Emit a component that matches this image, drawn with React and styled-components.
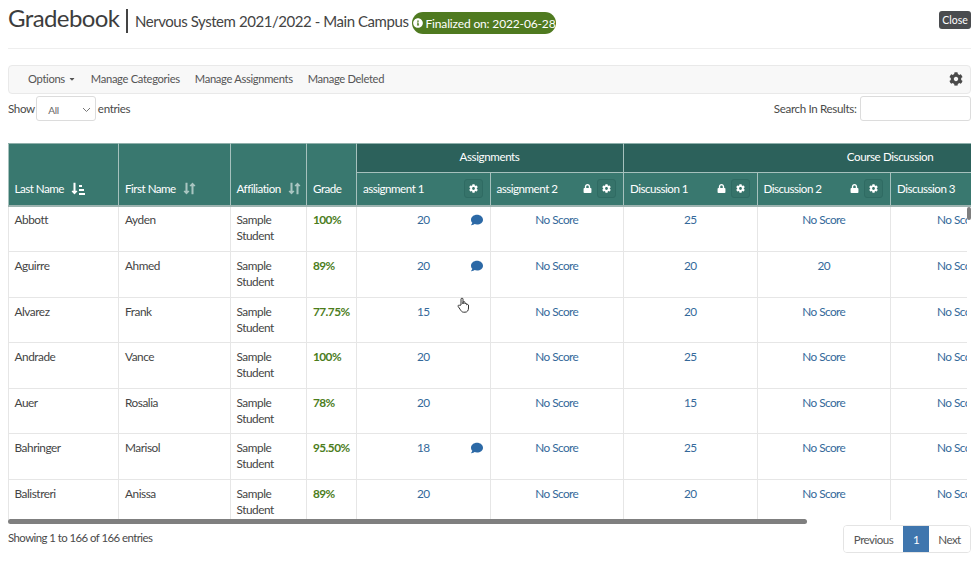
import React from 'react';
import styled, { createGlobalStyle } from 'styled-components';
import { FaCog, FaLock, FaComment, FaInfoCircle, FaCaretDown, FaLongArrowAltDown, FaLongArrowAltUp } from 'react-icons/fa';

const Global = createGlobalStyle`
  html, body { margin: 0; padding: 0; background: #fff; }
  body { font-family: Lato, "Noto Sans", sans-serif; color: #454545; font-size: 12px; overflow: hidden; }
  * { box-sizing: border-box; }
`;

const Page = styled.div`
  width: 980px; height: 568px; padding: 0 9px 0 8px; position: relative; overflow: hidden;
`;
const Header = styled.header`
  height: 49px; display: flex; align-items: flex-start; justify-content: space-between;
  border-bottom: 1px solid #eeeeee;
`;
const TitleGroup = styled.div`display: flex; align-items: center; height: 36px;`;
const Title = styled.h1`
  margin: 0; font-size: 24px; font-weight: 400; letter-spacing: -0.6px; color: #3d3d3d; padding-right: 7px; line-height: 34px;
`;
const Bar = styled.span`display: block; width: 1.5px; height: 24px; margin-top: 5px; background: #444; margin-right: 7px;`;
const Subtitle = styled.span`font-size: 15px; letter-spacing: -0.44px; color: #444; margin-top: 5px; white-space: nowrap;`;
const Badge = styled.span`
  margin-left: 4px; margin-top: 10px; height: 22px; width: 144px; background: #4f7a20; color: #fff; border-radius: 11px;
  display: flex; align-items: center; justify-content: center; gap: 2px; font-size: 12px; letter-spacing: -0.15px; white-space: nowrap;
  svg { width: 10px; height: 10px; flex: none; }
`;
const CloseBtn = styled.button`
  margin-top: 11px; width: 32px; height: 18px; padding: 0; border: 0; border-radius: 3px; background: #4a4c4f; color: #fff;
  font: 400 10.5px Lato, sans-serif;
`;
const Toolbar = styled.nav`
  margin-top: 16px; height: 29px; padding: 0 7px 2px 19px; border: 1px solid #e9e9e9; border-radius: 4px; background: #f8f8f8;
  display: flex; align-items: center; gap: 15px; font-size: 11.2px; letter-spacing: -0.33px; color: #555;
`;
const NavItem = styled.span`display: inline-flex; align-items: center; gap: 3px; svg { width: 8px; height: 8px; }`;
const Gear = styled.span`margin-left: auto; display: flex; color: #4a4a4a; svg { width: 14px; height: 14px; }`;
const Controls = styled.div`
  margin-top: 2px; height: 25px; display: flex; justify-content: space-between; align-items: center; font-size: 11.6px; letter-spacing: -0.35px; color: #4a4a4a;
`;
const Group = styled.div`display: flex; align-items: center; gap: 1.5px;`;
const FakeSelect = styled.div`
  width: 60px; height: 25px; border: 1px solid #dcdcdc; border-radius: 3px; background: #fff;
  display: flex; align-items: center; justify-content: space-between; padding: 2px 3px 0 11px; font-size: 10px; color: #666;
`;
const Chevron = styled.svg`width: 9px; height: 6px; margin-right: 1px;`;
const SearchBox = styled.input`width: 111px; height: 25px; margin-left: 2px; border: 1px solid #dcdcdc; border-radius: 3px; background: #fff;`;

const TableArea = styled.div`margin-top: 22px; width: 963px; height: 382px; position: relative; overflow: hidden;`;
const Grid = styled.table`
  table-layout: fixed; width: 1041px; border-collapse: collapse; border-spacing: 0; margin-left: -0.5px;
`;
const HeadCell = styled.th`
  background: #39786f; color: #fff; font-weight: 400; font-size: 11.6px; letter-spacing: -0.5px; text-align: left;
  border: 1px solid #a6c1bd; border-bottom: 0; border-top: 1px solid #8fb0ab; padding: 0 7px 3px 6px; height: 33px; vertical-align: bottom;
  &[rowspan] { padding-bottom: 11px; }
`;
const GroupCell = styled(HeadCell)`
  background: #2c615b; height: 29px; padding-bottom: 4px; text-align: center; vertical-align: middle; border-bottom: 1px solid #a6c1bd; letter-spacing: -0.4px;
`;
const ScrollHead = styled.div`position: relative; z-index: 1; height: 64px; overflow: hidden; border-bottom: 2px solid #9db3b0;`;
const HeadInner = styled.div`display: flex; align-items: center; justify-content: space-between; height: 30px; gap: 6px;`;
const HeadLabel = styled.div`display: flex; align-items: center; gap: 8px; white-space: nowrap;`;
const Sort = styled.span`
  display: inline-flex; color: ${p => (p.$on ? '#fff' : '#a9c5c1')}; svg { width: 7px; height: 13px; margin-left: -1px; }
`;
const SortLines = styled.span`display: flex; flex-direction: column; gap: 2px; margin-left: 1px; justify-content: flex-end;`;
const SortLine = styled.i`display: block; height: 2px; background: #fff; width: ${p => p.$w}px;`;
const Actions = styled.div`display: flex; align-items: center; gap: 5px; svg { width: 9px; height: 9px; }`;
const IconBtn = styled.span`
  width: 19px; height: 19px; border: 1px solid #2f6b63; border-radius: 3px; background: #36736a; display: flex; align-items: center; justify-content: center;
`;
const ScrollBody = styled.div`width: 959px; height: 314px; margin-top: -1px; overflow: hidden;`;
const Cell = styled.td`
  border: 1px solid #e6e6e6; border-top: 0; padding: 6px 6px 0; height: 45.6px; vertical-align: top; font-size: 11.8px; letter-spacing: -0.45px; line-height: 16px; color: #454545;
`;
const GradeCell = styled(Cell)`color: #4c7d1c; font-weight: 700; letter-spacing: -0.55px;`;
const ScoreCell = styled(Cell)`text-align: center; color: #34699a; position: relative; white-space: nowrap; overflow: hidden; letter-spacing: -0.55px;`;
const Clip = styled(ScoreCell)`text-align: left; padding-left: 46px;`;
const Note = styled.span`
  position: absolute; right: 7px; top: 8px; color: #2c69a6; display: flex; svg { width: 12px; height: 12px; }
`;
const ThumbH = styled.div`position: absolute; left: 0; bottom: 1px; width: 799px; height: 5px; border-radius: 3px; background: #7f7f7f;`;
const ThumbV = styled.div`position: absolute; right: 0; top: 64px; width: 4px; height: 13px; border-radius: 2px; background: #7f7f7f;`;
const Footer = styled.div`display: flex; justify-content: space-between; align-items: flex-start; font-size: 11.4px; letter-spacing: -0.55px; color: #4a4a4a;`;
const Info = styled.div`margin-top: 6px;`;
const Pager = styled.div`display: flex; height: 28px; border: 1px solid #e4e4e4; border-radius: 4px; overflow: hidden; color: #555; font-size: 11.6px;`;
const PageBtn = styled.span`
  display: flex; align-items: center; justify-content: center; width: ${p => p.$w}px;
  background: ${p => (p.$active ? '#3f76ae' : '#fff')}; color: ${p => (p.$active ? '#fff' : '#555')};
`;
const Hand = styled.svg`position: absolute; left: 457px; top: 297px; width: 13px; height: 16px;`;

const widths = [110.5, 111.5, 76.5, 50, 133.5, 133.5, 133.5, 133.5, 133.5, 133.5];
const Cols = () => <colgroup>{widths.map((w, i) => <col key={i} style={{ width: w }} />)}</colgroup>;

const rows = [
  ['Abbott', 'Ayden', '100%', '20', true, 'No Score', '25', 'No Score'],
  ['Aguirre', 'Ahmed', '89%', '20', true, 'No Score', '20', '20'],
  ['Alvarez', 'Frank', '77.75%', '15', false, 'No Score', '20', 'No Score'],
  ['Andrade', 'Vance', '100%', '20', false, 'No Score', '25', 'No Score'],
  ['Auer', 'Rosalia', '78%', '20', false, 'No Score', '15', 'No Score'],
  ['Bahringer', 'Marisol', '95.50%', '18', true, 'No Score', '25', 'No Score'],
  ['Balistreri', 'Anissa', '89%', '20', false, 'No Score', '20', 'No Score'],
];

const SortIcon = ({ on }) => (
  <Sort $on={on}>
    <FaLongArrowAltDown />
    {on ? (
      <SortLines><SortLine $w={3} /><SortLine $w={5} /><SortLine $w={6} /></SortLines>
    ) : <FaLongArrowAltUp />}
  </Sort>
);
const ColHead = ({ label, lock, settings = true }) => (
  <HeadCell>
    <HeadInner>
      <HeadLabel>{label}</HeadLabel>
      {settings && (
        <Actions>
          {lock && <FaLock />}
          <IconBtn><FaCog /></IconBtn>
        </Actions>
      )}
    </HeadInner>
  </HeadCell>
);

export default function App() {
  return (
    <Page>
      <Global />
      <Header>
        <TitleGroup>
          <Title>Gradebook</Title>
          <Bar />
          <Subtitle>Nervous System 2021/2022 - Main Campus</Subtitle>
          <Badge><FaInfoCircle />Finalized on: 2022-06-28</Badge>
        </TitleGroup>
        <CloseBtn>Close</CloseBtn>
      </Header>
      <Toolbar>
        <NavItem>Options <FaCaretDown /></NavItem>
        <NavItem>Manage Categories</NavItem>
        <NavItem>Manage Assignments</NavItem>
        <NavItem>Manage Deleted</NavItem>
        <Gear><FaCog /></Gear>
      </Toolbar>
      <Controls>
        <Group>
          Show
          <FakeSelect>All
            <Chevron viewBox="0 0 9 6"><path d="M1 1l3.5 3.5L8 1" fill="none" stroke="#777" strokeWidth="1" /></Chevron>
          </FakeSelect>
          entries
        </Group>
        <Group>Search In Results: <SearchBox /></Group>
      </Controls>
      <TableArea>
        <ScrollHead>
          <Grid>
            <Cols />
            <thead>
              <tr>
                <HeadCell rowSpan={2}><HeadLabel>Last Name <SortIcon on /></HeadLabel></HeadCell>
                <HeadCell rowSpan={2}><HeadLabel>First Name <SortIcon /></HeadLabel></HeadCell>
                <HeadCell rowSpan={2}><HeadLabel>Affiliation <SortIcon /></HeadLabel></HeadCell>
                <HeadCell rowSpan={2}>Grade</HeadCell>
                <GroupCell colSpan={2}>Assignments</GroupCell>
                <GroupCell colSpan={4}>Course Discussion</GroupCell>
              </tr>
              <tr>
                <ColHead label="assignment 1" />
                <ColHead label="assignment 2" lock />
                <ColHead label="Discussion 1" lock />
                <ColHead label="Discussion 2" lock />
                <ColHead label="Discussion 3" settings={false} />
                <HeadCell />
              </tr>
            </thead>
          </Grid>
        </ScrollHead>
        <ScrollBody>
          <Grid>
            <Cols />
            <tbody>
              {rows.map(r => (
                <tr key={r[0]}>
                  <Cell>{r[0]}</Cell>
                  <Cell>{r[1]}</Cell>
                  <Cell>Sample Student</Cell>
                  <GradeCell>{r[2]}</GradeCell>
                  <ScoreCell>{r[3]}{r[4] && <Note><FaComment /></Note>}</ScoreCell>
                  <ScoreCell>{r[5]}</ScoreCell>
                  <ScoreCell>{r[6]}</ScoreCell>
                  <ScoreCell>{r[7]}</ScoreCell>
                  <Clip>No Score</Clip>
                  <Cell />
                </tr>
              ))}
            </tbody>
          </Grid>
        </ScrollBody>
        <ThumbH />
        <ThumbV />
      </TableArea>
      <Footer>
        <Info>Showing 1 to 166 of 166 entries</Info>
        <Pager>
          <PageBtn $w={59}>Previous</PageBtn>
          <PageBtn $w={26} $active>1</PageBtn>
          <PageBtn $w={41}>Next</PageBtn>
        </Pager>
      </Footer>
      <Hand viewBox="0 0 13 16">
        <path d="M4 8V2.2a1 1 0 0 1 2 0V7l0-1.4a1 1 0 0 1 2 0V7a1 1 0 0 1 1.8 0v1a1 1 0 0 1 1.7 0v3c0 2.5-1.2 4.2-3.5 4.2H6.5C5 15.2 4.2 14 3 12.2L1.2 9.5c-.6-1 .8-2 1.6-1.1z" fill="#fff" stroke="#333" strokeWidth="1" />
      </Hand>
    </Page>
  );
}
